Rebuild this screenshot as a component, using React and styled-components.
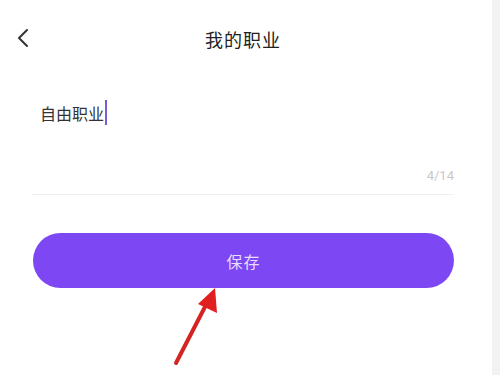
import React from 'react'
import styled, { createGlobalStyle } from 'styled-components'

const GlobalStyle = createGlobalStyle`
    html, body {
        margin: 0;
        padding: 0;
        background: #ffffff;
    }
    body {
        font-family: "Noto Sans CJK SC", "Noto Sans", sans-serif;
    }
`

const ChevronLeft = () => (
    <svg width="14" height="20" viewBox="0 0 14 20" fill="none">
        <path d="M11 2 L3 10 L11 18" stroke="#333" strokeWidth="2" strokeLinecap="round" strokeLinejoin="round" />
    </svg>
)

const Arrow = () => (
    <svg width="60" height="90" viewBox="0 0 60 90">
        <line x1="8" y1="82" x2="40" y2="20" stroke="#d42424" strokeWidth="4" strokeLinecap="round" />
        <polygon points="47,7 49,32 30,23" fill="#e02020" />
    </svg>
)

const App = () => {
    return (
        <Page>
            <GlobalStyle />
            <Main>
                <Header>
                    <BackButton aria-label="back">
                        <ChevronLeft />
                    </BackButton>
                    <Title>我的职业</Title>
                </Header>
                <Field>
                    <InputLine>
                        自由职业
                        <Caret />
                    </InputLine>
                    <Counter>4/14</Counter>
                </Field>
                <SaveArea>
                    <SaveButton>保存</SaveButton>
                    <Pointer>
                        <Arrow />
                    </Pointer>
                </SaveArea>
            </Main>
            <Strip />
        </Page>
    )
}

const Page = styled.div`
    display: grid;
    grid-template-columns: 486px 1fr;
    width: 500px;
    height: 375px;
    overflow: hidden;
`

const Main = styled.div`
    display: flex;
    flex-direction: column;
`

const Strip = styled.div`
    margin-left: 6px;
    height: 100%;
    background: #f2f2f2;
`

const Header = styled.div`
    height: 78px;
    display: flex;
    align-items: center;
    justify-content: center;
    position: relative;
`

const BackButton = styled.button`
    position: absolute;
    left: 16px;
    top: 28px;
    padding: 0;
    border: none;
    background: none;
    display: flex;
`

const Title = styled.div`
    font-size: 18px;
    color: #222;
    font-weight: 400;
    letter-spacing: 1px;
`

const Field = styled.div`
    margin: 0 32px;
    padding-top: 22px;
    padding-bottom: 8px;
    border-bottom: 1px solid #f0f0f0;
    display: flex;
    flex-direction: column;
`

const InputLine = styled.div`
    padding-left: 8px;
    font-size: 16px;
    line-height: 24px;
    color: #333;
    display: flex;
    align-items: center;
`

const Caret = styled.span`
    display: inline-block;
    width: 2px;
    height: 25px;
    margin-left: 1px;
    background: #7c5ad6;
`

const Counter = styled.div`
    margin-top: 41px;
    align-self: flex-end;
    font-size: 13px;
    line-height: 20px;
    color: #c8c8c8;
    font-family: "Roboto", "Noto Sans", sans-serif;
`

const SaveArea = styled.div`
    position: relative;
    margin: 38px 32px 0 33px;
`

const SaveButton = styled.button`
    width: 100%;
    height: 55px;
    border: none;
    border-radius: 28px;
    background: #7d47f3;
    color: #eadcff;
    font-family: "Noto Sans CJK SC", sans-serif;
    font-size: 16px;
    letter-spacing: 1px;
`

const Pointer = styled.div`
    position: absolute;
    left: 135px;
    top: 48px;
    display: flex;
`

export default App
